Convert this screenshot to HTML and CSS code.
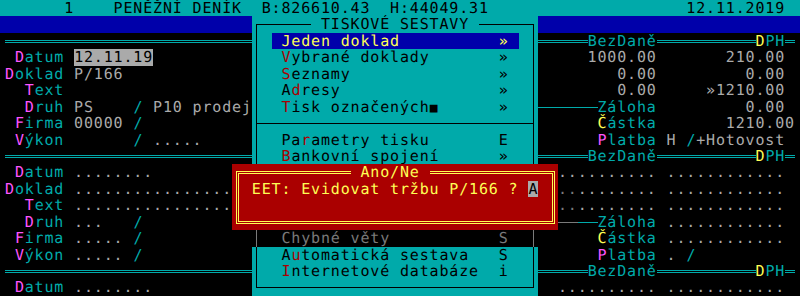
FILE: index.html
```html
<!DOCTYPE html>
<html lang="cs">
<head>
    <meta charset="UTF-8">
    <title>Peněžní deník - tiskové sestavy</title>
    <link rel="stylesheet" href="styles.css">
</head>
<body>

<div class="scr">
    <!-- status line -->
    <div class="row top"><span>      1    PENĚŽNÍ DENÍK  B:826610.43  H:44049.31                    12.11.2019 </span></div>

    <div class="row bar">
        <span>                         </span>
        <span class="m"><span class="ln tl">┌</span><span class="ln h">─────</span> TISKOVÉ SESTAVY <span class="ln h">─────</span><span class="ln tr">┐</span></span>
    </div>

    <!-- first record -->
    <div class="row">
        <span class="ln hh">═════════════════════════</span>
        <span class="m"><span class="ln v">│</span> <span class="sel"> Jeden doklad          » </span> <span class="ln v">│</span></span>
        <span class="ln hh">═════</span><span class="cy">BezDaně</span><span class="ln hh">══════════</span><span class="yl">D</span><span class="cy">PH</span><span class="ln hh">═</span>
    </div>

    <div class="row">
        <span> <span class="mg">D</span><span class="cy">atum</span> <span class="fld">12.11.19</span>          </span>
        <span class="m"><span class="ln v">│</span>  <span class="k">V</span>ybrané doklady       »  <span class="ln v">│</span></span>
        <span>     1000.00       210.00 </span>
    </div>

    <div class="row">
        <span><span class="mg">D</span><span class="cy">oklad</span> P/166             </span>
        <span class="m"><span class="ln v">│</span>  <span class="k">S</span>eznamy               »  <span class="ln v">│</span></span>
        <span>        0.00         0.00 </span>
    </div>

    <div class="row">
        <span>  <span class="mg">T</span><span class="cy">ext</span>                   </span>
        <span class="m"><span class="ln v">│</span>  A<span class="k">d</span>resy                »  <span class="ln v">│</span></span>
        <span>        0.00     »1210.00 </span>
    </div>

    <div class="row">
        <span>  <span class="mg">D</span><span class="cy">ruh</span> PS    <span class="cy">/</span> P10 prodej</span>
        <span class="m"><span class="ln v">│</span>  <span class="k">T</span>isk označených<span class="sq">■</span>      »  <span class="ln v">│</span></span>
        <span class="ln h">──────</span><span class="cy">Záloha</span><span>         0.00 </span>
    </div>

    <div class="row">
        <span> <span class="mg">F</span><span class="cy">irma</span> 00000 <span class="cy">/</span>           </span>
        <span class="m"><span class="ln lt">├</span><span class="ln h">───────────────────────────</span><span class="ln rt">┤</span></span>
        <span>      <span class="yl">Č</span><span class="cy">ástka</span>       1210.00 </span>
    </div>

    <div class="row">
        <span> <span class="mg">V</span><span class="cy">ýkon</span>       <span class="cy">/</span> .....     </span>
        <span class="m"><span class="ln v">│</span>  Pa<span class="k">r</span>ametry tisku       E  <span class="ln v">│</span></span>
        <span>      <span class="mg">P</span><span class="cy">latba</span> H <span class="cy">/</span>+Hotovost </span>
    </div>

    <!-- second record, under the dialog -->
    <div class="row">
        <span class="ln hh">═════════════════════════</span>
        <span class="m"><span class="ln v">│</span>  <span class="k">B</span>ankovní spojení      »  <span class="ln v">│</span></span>
        <span class="ln hh">═════</span><span class="cy">BezDaně</span><span class="ln hh">══════════</span><span class="yl">D</span><span class="cy">PH</span><span class="ln hh">═</span>
    </div>

    <div class="row">
        <span> <span class="mg">D</span><span class="cy">atum</span> ........        </span>
        <span class="dlg"><span class="ln d-tl">╔</span><span class="ln hh">═══════════</span> Ano/Ne <span class="ln hh">════════════</span><span class="ln d-tr">╗</span></span>
        <span>.......... ............ </span>
    </div>

    <div class="row">
        <span><span class="mg">D</span><span class="cy">oklad</span> ................</span>
        <span class="dlg"><span class="ln vv">║</span> EET: Evidovat tržbu P/166 ? <span class="cur">A</span> <span class="ln vv">║</span></span>
        <span class="sh">..</span><span>........ ............ </span>
    </div>

    <div class="row">
        <span>  <span class="mg">T</span><span class="cy">ext</span> ................</span>
        <span class="dlg"><span class="ln vv">║</span>                               <span class="ln vv">║</span></span>
        <span class="sh">..</span><span>........ ............ </span>
    </div>

    <div class="row">
        <span>  <span class="mg">D</span><span class="cy">ruh</span> ...   <span class="cy">/</span>         </span>
        <span class="dlg"><span class="ln d-bl">╚</span><span class="ln hh">═══════════════════════════════</span><span class="ln d-br">╝</span></span>
        <span class="sh ln h">──</span><span class="ln h">──</span><span class="cy">Záloha</span><span> ............ </span>
    </div>

    <div class="row">
        <span> <span class="mg">F</span><span class="cy">irma</span> ..... <span class="cy">/</span>           </span>
        <span class="sh"><span class="ln v">│</span>  Chybné věty           S  <span class="ln v">│</span>    </span>
        <span>  <span class="yl">Č</span><span class="cy">ástka</span> ............ </span>
    </div>

    <div class="row">
        <span> <span class="mg">V</span><span class="cy">ýkon</span> ..... <span class="cy">/</span>           </span>
        <span class="m"><span class="ln v">│</span>  A<span class="k">u</span>tomatická sestava   S  <span class="ln v">│</span></span>
        <span>      <span class="mg">P</span><span class="cy">latba</span> . <span class="cy">/</span>          </span>
    </div>

    <div class="row">
        <span class="ln hh">═════════════════════════</span>
        <span class="m"><span class="ln v">│</span>  <span class="k">I</span>nternetové databáze  i  <span class="ln v">│</span></span>
        <span class="ln hh">═════</span><span class="cy">BezDaně</span><span class="ln hh">══════════</span><span class="yl">D</span><span class="cy">PH</span><span class="ln hh">═</span>
    </div>

    <div class="row">
        <span> <span class="mg">D</span><span class="cy">atum</span> ........          </span>
        <span class="m"><span class="ln bl">└</span><span class="ln h">───────────────────────────</span><span class="ln br">┘</span></span>
        <span>  .......... ............ </span>
    </div>
</div>

</body>
</html>
```

FILE: styles.css
```css
/* Text mode screen, 80 x 18 character cells */
body {
    margin: 0;
    background: #000;
}

.scr {
    --rh: 16.444px;        /* one character row */
    --cw: 9.875px;         /* one character column */
    --lc: #00aaaa;         /* colour of box lines */
    width: 800px;
    height: 296px;
    overflow: hidden;
    background: #000;
    color: #aaaaaa;
    font-family: "DejaVu Sans Mono", monospace;
    font-size: 15px;
    letter-spacing: 0.844px;   /* 15px DejaVu advance 9.03 -> 9.875 */
    line-height: 16px;
    text-rendering: geometricPrecision;
}

.scr span {
    white-space: pre;
}

.row {
    display: flex;
    height: var(--rh);
    padding-left: 5px;
}

.row > span {
    flex: none;
}

/* Screen areas */
.top {
    background: #00aaaa;
    color: #000;
    box-sizing: border-box;
    padding-top: 1px;
    line-height: 15.444px;
}

.bar {
    background: #0000aa;
}

.m {
    background: #00aaaa;
    color: #000;
    --lc: #000;
}

.dlg {
    background: #aa0000;
    color: #ffff55;
    --lc: #ffff55;
}

/* dialog shadow */
.sh {
    background: #000;
    color: #7a7a7a;
    --lc: #7a7a7a;
}

/* Text colours */
.k  { color: #aa0000; }
.mg { color: #ff55ff; }
.cy { color: #00aaaa; }
.yl { color: #ffff55; }

.sel, .fld, .cur, .ln {
    display: inline-block;
    height: var(--rh);
    vertical-align: top;
}

.sel {
    background: #0000aa;
    color: #ffff55;
}

.fld, .cur {
    background: #aaaaaa;
    color: #000;
}

.sq {
    display: inline-block;
    width: var(--cw);
    font-size: 13px;
    letter-spacing: 0;
}

/* Box drawing: the glyph stays as text, the lines are painted */
.ln {
    color: transparent;
    background-repeat: no-repeat;
    --g: linear-gradient(var(--lc), var(--lc));
}

.h {
    background-image: var(--g);
    background-position: 0 8px;
    background-size: 100% 1px;
}

.v {
    background-image: var(--g);
    background-position: 50% 0;
    background-size: 1px 100%;
}

.tl, .tr, .bl, .br, .lt, .rt {
    background-image: var(--g), var(--g);
}

.tl { background-position: 100% 8px, 50% 8px; background-size: 50% 1px, 1px 100%; }
.tr { background-position: 0 8px, 50% 8px;    background-size: 50% 1px, 1px 100%; }
.bl { background-position: 100% 8px, 50% 0;   background-size: 50% 1px, 1px 9px; }
.br { background-position: 0 8px, 50% 0;      background-size: 50% 1px, 1px 9px; }
.lt { background-position: 100% 8px, 50% 0;   background-size: 50% 1px, 1px 100%; }
.rt { background-position: 0 8px, 50% 0;     background-size: 50% 1px, 1px 100%; }

/* double lines */
.hh {
    background-image: var(--g), var(--g);
    background-position: 0 7px, 0 9px;
    background-size: 100% 1px, 100% 1px;
}

.vv {
    background-image: var(--g), var(--g);
    background-position: 4px 0, 6px 0;
    background-size: 1px 100%, 1px 100%;
}

.d-tl, .d-tr, .d-bl, .d-br {
    background-image: var(--g), var(--g), var(--g), var(--g);
}

.d-tl {
    background-position: 4px 7px, 4px 7px, 6px 9px, 6px 9px;
    background-size: 100% 1px, 1px 100%, 100% 1px, 1px 100%;
}

.d-tr {
    background-position: 0 7px, 6px 7px, 0 9px, 4px 9px;
    background-size: 7px 1px, 1px 100%, 5px 1px, 1px 100%;
}

.d-bl {
    background-position: 4px 0, 4px 9px, 6px 0, 6px 7px;
    background-size: 1px 10px, 100% 1px, 1px 8px, 100% 1px;
}

.d-br {
    background-position: 6px 0, 0 9px, 4px 0, 0 7px;
    background-size: 1px 10px, 7px 1px, 1px 8px, 5px 1px;
}
```
